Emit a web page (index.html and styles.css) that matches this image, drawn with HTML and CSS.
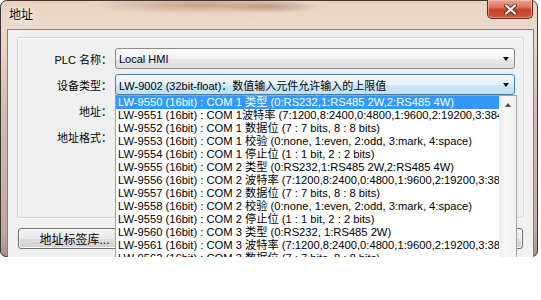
FILE: index.html
```html
<!DOCTYPE html>
<html>
<head>
    <title>地址</title>
    <link rel="stylesheet" href="styles.css">
</head>
<body>
    <div class="shot">
        <div class="window">
            <div class="titlebar">
                <span class="title">地址</span>
                <div class="close-btn">
                    <svg width="13" height="11" viewBox="0 0 13 11">
                        <path d="M2 1.5 L11 9.5 M11 1.5 L2 9.5" stroke="#5a2a22" stroke-width="4" stroke-linecap="round"/>
                        <path d="M2 1.5 L11 9.5 M11 1.5 L2 9.5" stroke="#ffffff" stroke-width="2.2" stroke-linecap="round"/>
                    </svg>
                </div>
            </div>
            <div class="client">
                <div class="group">
                    <div class="form-row">
                        <label>PLC 名称：</label>
                        <div class="combo"><span class="value">Local HMI</span><i class="arrow"></i></div>
                    </div>
                    <div class="form-row">
                        <label>设备类型：</label>
                        <div class="combo open">
                            <span class="value">LW-9002 (32bit-float)：数值输入元件允许输入的上限值</span><i class="arrow"></i>
                            <!-- opened dropdown list -->
                            <div class="dropdown">
                                <ul class="options">
                                    <li class="selected">LW-9550 (16bit) : COM 1 类型 (0:RS232,1:RS485 2W,2:RS485 4W)</li>
                                    <li>LW-9551 (16bit) : COM 1波特率 (7:1200,8:2400,0:4800,1:9600,2:19200,3:38400)</li>
                                    <li>LW-9552 (16bit) : COM 1 数据位 (7 : 7 bits, 8 : 8 bits)</li>
                                    <li>LW-9553 (16bit) : COM 1 校验 (0:none, 1:even, 2:odd, 3:mark, 4:space)</li>
                                    <li>LW-9554 (16bit) : COM 1 停止位 (1 : 1 bit, 2 : 2 bits)</li>
                                    <li>LW-9555 (16bit) : COM 2 类型 (0:RS232,1:RS485 2W,2:RS485 4W)</li>
                                    <li>LW-9556 (16bit) : COM 2 波特率 (7:1200,8:2400,0:4800,1:9600,2:19200,3:38400)</li>
                                    <li>LW-9557 (16bit) : COM 2 数据位 (7 : 7 bits, 8 : 8 bits)</li>
                                    <li>LW-9558 (16bit) : COM 2 校验 (0:none, 1:even, 2:odd, 3:mark, 4:space)</li>
                                    <li>LW-9559 (16bit) : COM 2 停止位 (1 : 1 bit, 2 : 2 bits)</li>
                                    <li>LW-9560 (16bit) : COM 3 类型 (0:RS232, 1:RS485 2W)</li>
                                    <li>LW-9561 (16bit) : COM 3 波特率 (7:1200,8:2400,0:4800,1:9600,2:19200,3:38400)</li>
                                    <li>LW-9562 (16bit) : COM 3 数据位 (7 : 7 bits, 8 : 8 bits)</li>
                                </ul>
                                <div class="scrollbar"><div class="scroll-up"><i></i></div></div>
                            </div>
                        </div>
                    </div>
                    <div class="form-row">
                        <label>地址：</label>
                        <div class="field"></div>
                    </div>
                    <div class="form-row">
                        <label>地址格式：</label>
                        <div class="field"></div>
                    </div>
                </div>
                <div class="buttons">
                    <button class="btn">地址标签库...</button>
                    <!-- covered by the open list -->
                    <button class="btn ok"></button>
                </div>
            </div>
        </div>
    </div>
</body>
</html>
```
FILE: styles.css
```css
body { margin: 0; background: #fff; font-family: "Liberation Sans", "Noto Sans CJK SC", sans-serif; font-size: 11px; color: #000; }
.shot { width: 541px; height: 257px; overflow: hidden; }

.window {
    position: relative; width: 538px; height: 257px; box-sizing: border-box;
    display: flex; flex-direction: column; padding: 0 3px 7px 6px;
    border: 1px solid #3e3536; border-radius: 7px 7px 6px 6px;
    background:
        radial-gradient(ellipse 110px 9px at 200px 4px, rgba(150, 105, 75, .45), transparent),
        radial-gradient(ellipse 50px 6px at 270px 6px, rgba(120, 85, 60, .35), transparent),
        linear-gradient(to bottom, rgba(233, 212, 194, 0) 230px, rgba(150, 120, 100, .5) 100%),
        linear-gradient(to bottom, #e9d2c0 0, #eddacb 28px, #d3bab4 110px, #bea6a9 100%);
}

.titlebar { height: 28px; display: flex; justify-content: space-between; align-items: flex-start; }
.title { font-size: 12px; line-height: 28px; padding-left: 2px; text-shadow: 0 0 5px #fff, 0 0 8px #fff; }
.close-btn {
    width: 44px; height: 18px; margin-right: 1px; margin-top: -1px;
    display: flex; align-items: center; justify-content: center;
    border: 1px solid #6b2b22; border-top: none; border-radius: 0 0 5px 5px;
    background: linear-gradient(to bottom, #eba595 0, #dc745c 40%, #c7402a 55%, #d4553a 100%);
    box-shadow: inset 0 0 0 1px rgba(255, 210, 190, .5);
}

.client {
    flex: 1; display: flex; flex-direction: column;
    border: 1px solid #7f8184; background: #f0f0f0;
    padding: 7px 9px 8px 9px;
}

.group {
    height: 169px; padding: 10px 8px 0 0;
    border: 1px solid #d5d5d5; border-radius: 2px;
    box-shadow: inset 1px 1px 0 #fff, 1px 1px 0 #fff;
    display: flex; flex-direction: column; gap: 5px;
}
.form-row { display: flex; align-items: center; gap: 3px; height: 21px; }
.form-row label { width: 94px; text-align: right; white-space: nowrap; }

.combo {
    position: relative; width: 400px; height: 21px; box-sizing: border-box;
    display: flex; align-items: center; justify-content: space-between;
    padding: 0 4px 0 3px; white-space: nowrap;
    border: 1px solid #8b8b8b; border-radius: 3px;
    background: linear-gradient(to bottom, #fdfdfd 0, #f3f3f3 50%, #e8e8e8 51%, #e2e2e2 100%);
}
.combo.open {
    border-color: #3c7fb1;
    background: linear-gradient(to bottom, #f2f9fd 0, #e4f2fb 50%, #cfe8f7 51%, #bfe0f5 100%);
}
.arrow { width: 0; height: 0; border-left: 3.5px solid transparent; border-right: 3.5px solid transparent; border-top: 4px solid #000; margin-right: 1px; }

.dropdown {
    position: absolute; left: -1px; top: 20px; width: 402px; height: 175px; box-sizing: border-box;
    display: flex; background: #fff; border: 1px solid #a3a3a3; z-index: 2;
}
.options { flex: 1; list-style: none; margin: 0; padding: 0; overflow: hidden; font-size: 11.2px; }
.options li { height: 13px; line-height: 13px; padding-left: 2px; white-space: nowrap; overflow: hidden; }
.options li.selected { background: #3399ff; color: #fff; }
.scrollbar { width: 17px; background: linear-gradient(to right, #ececec, #f7f7f7 40%, #f1f1f1); }
.scroll-up { height: 17px; display: flex; align-items: center; justify-content: center; }
.scroll-up i { width: 0; height: 0; border-left: 3.5px solid transparent; border-right: 3.5px solid transparent; border-bottom: 4px solid #4a4a4a; }

.field { width: 400px; height: 21px; }

.buttons { display: flex; justify-content: space-between; margin-top: 10px; padding: 0 1px; }
.btn {
    height: 21px; width: 113px; padding: 0; font-family: inherit; font-size: 12px; color: #000;
    border: 1px solid #707070; border-radius: 3px;
    background: linear-gradient(to bottom, #f2f2f2 0, #ebebeb 50%, #dddddd 51%, #cfcfcf 100%);
    box-shadow: inset 0 0 0 1px #fcfcfc;
}
.btn.ok { width: 75px; }
```
